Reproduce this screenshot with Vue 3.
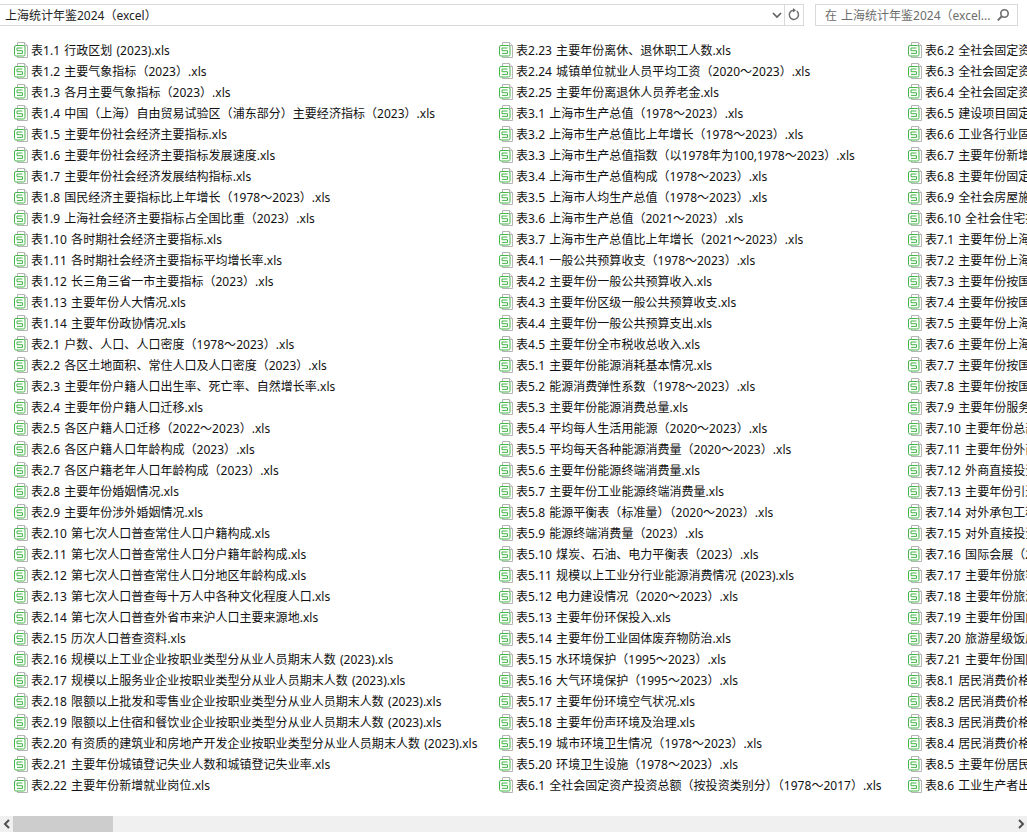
<template>
  <div class="window">
    <div class="toolbar">
      <div class="address">
        <span class="path">上海统计年鉴2024（excel）</span>
        <svg class="chevron" width="12" height="12" viewBox="0 0 12 12">
          <path d="M2 4l4 4 4-4" fill="none" stroke="#5f5f5f" stroke-width="1.6" />
        </svg>
        <span class="refresh">
          <svg width="14" height="14" viewBox="0 0 14 14">
            <path d="M9.8 3.2a4.6 4.6 0 1 1-3.4-1" fill="none" stroke="#6d6d6d" stroke-width="1.5" />
            <path d="M6 0v4.4l3-2.2z" fill="#6d6d6d" />
          </svg>
        </span>
      </div>
      <div class="search">
        <span class="search-text">在 上海统计年鉴2024（excel...</span>
        <svg width="14" height="14" viewBox="0 0 14 14">
          <circle cx="8.5" cy="5.5" r="3.7" fill="none" stroke="#6d6d6d" stroke-width="1.6" />
          <path d="M5.8 8.2L1.8 12.4" stroke="#6d6d6d" stroke-width="2" />
        </svg>
      </div>
    </div>

    <div class="files">
      <ul v-for="col in columns" :key="col.cls" class="column" :class="col.cls">
        <li v-for="name in col.items" :key="name" class="file">
          <svg class="file-icon" width="16" height="16" viewBox="0 0 16 16">
            <path d="M4.5 .5h7l3 3v12h-10z" fill="#fff" stroke="#b4b4b4" />
            <path d="M11.5 .5v3h3" fill="#f2f2f2" stroke="#b4b4b4" />
            <rect x="1.5" y="3.5" width="10.5" height="10.5" rx="1.5" fill="#fff" stroke="#45b549" />
            <path d="M4 6h5.5M4 8.7h5.5M4 11.4h5.5M4 6v2.7M9.5 8.7v2.7" fill="none" stroke="#45b549" />
          </svg>
          <span class="name">{{ name }}</span>
        </li>
      </ul>
    </div>

    <div class="hscroll">
      <span class="arrow">
        <svg width="8" height="10" viewBox="0 0 8 10"><path d="M6 1L2 5l4 4" fill="none" stroke="#505050" stroke-width="2" /></svg>
      </span>
      <div class="track"><div class="thumb"></div></div>
      <span class="arrow">
        <svg width="8" height="10" viewBox="0 0 8 10"><path d="M2 1l4 4-4 4" fill="none" stroke="#505050" stroke-width="2" /></svg>
      </span>
    </div>
  </div>
</template>

<script setup>
const col1 = [
  '表1.1 行政区划 (2023).xls',
  '表1.2 主要气象指标（2023）.xls',
  '表1.3 各月主要气象指标（2023）.xls',
  '表1.4 中国（上海）自由贸易试验区（浦东部分）主要经济指标（2023）.xls',
  '表1.5 主要年份社会经济主要指标.xls',
  '表1.6 主要年份社会经济主要指标发展速度.xls',
  '表1.7 主要年份社会经济发展结构指标.xls',
  '表1.8 国民经济主要指标比上年增长（1978～2023）.xls',
  '表1.9 上海社会经济主要指标占全国比重（2023）.xls',
  '表1.10 各时期社会经济主要指标.xls',
  '表1.11 各时期社会经济主要指标平均增长率.xls',
  '表1.12 长三角三省一市主要指标（2023）.xls',
  '表1.13 主要年份人大情况.xls',
  '表1.14 主要年份政协情况.xls',
  '表2.1 户数、人口、人口密度（1978～2023）.xls',
  '表2.2 各区土地面积、常住人口及人口密度（2023）.xls',
  '表2.3 主要年份户籍人口出生率、死亡率、自然增长率.xls',
  '表2.4 主要年份户籍人口迁移.xls',
  '表2.5 各区户籍人口迁移（2022～2023）.xls',
  '表2.6 各区户籍人口年龄构成（2023）.xls',
  '表2.7 各区户籍老年人口年龄构成（2023）.xls',
  '表2.8 主要年份婚姻情况.xls',
  '表2.9 主要年份涉外婚姻情况.xls',
  '表2.10 第七次人口普查常住人口户籍构成.xls',
  '表2.11 第七次人口普查常住人口分户籍年龄构成.xls',
  '表2.12 第七次人口普查常住人口分地区年龄构成.xls',
  '表2.13 第七次人口普查每十万人中各种文化程度人口.xls',
  '表2.14 第七次人口普查外省市来沪人口主要来源地.xls',
  '表2.15 历次人口普查资料.xls',
  '表2.16 规模以上工业企业按职业类型分从业人员期末人数 (2023).xls',
  '表2.17 规模以上服务业企业按职业类型分从业人员期末人数 (2023).xls',
  '表2.18 限额以上批发和零售业企业按职业类型分从业人员期末人数 (2023).xls',
  '表2.19 限额以上住宿和餐饮业企业按职业类型分从业人员期末人数 (2023).xls',
  '表2.20 有资质的建筑业和房地产开发企业按职业类型分从业人员期末人数 (2023).xls',
  '表2.21 主要年份城镇登记失业人数和城镇登记失业率.xls',
  '表2.22 主要年份新增就业岗位.xls'
]

const col2 = [
  '表2.23 主要年份离休、退休职工人数.xls',
  '表2.24 城镇单位就业人员平均工资（2020～2023）.xls',
  '表2.25 主要年份离退休人员养老金.xls',
  '表3.1 上海市生产总值（1978～2023）.xls',
  '表3.2 上海市生产总值比上年增长（1978～2023）.xls',
  '表3.3 上海市生产总值指数（以1978年为100,1978～2023）.xls',
  '表3.4 上海市生产总值构成（1978～2023）.xls',
  '表3.5 上海市人均生产总值（1978～2023）.xls',
  '表3.6 上海市生产总值（2021～2023）.xls',
  '表3.7 上海市生产总值比上年增长（2021～2023）.xls',
  '表4.1 一般公共预算收支（1978～2023）.xls',
  '表4.2 主要年份一般公共预算收入.xls',
  '表4.3 主要年份区级一般公共预算收支.xls',
  '表4.4 主要年份一般公共预算支出.xls',
  '表4.5 主要年份全市税收总收入.xls',
  '表5.1 主要年份能源消耗基本情况.xls',
  '表5.2 能源消费弹性系数（1978～2023）.xls',
  '表5.3 主要年份能源消费总量.xls',
  '表5.4 平均每人生活用能源（2020～2023）.xls',
  '表5.5 平均每天各种能源消费量（2020～2023）.xls',
  '表5.6 主要年份能源终端消费量.xls',
  '表5.7 主要年份工业能源终端消费量.xls',
  '表5.8 能源平衡表（标准量）（2020～2023）.xls',
  '表5.9 能源终端消费量（2023）.xls',
  '表5.10 煤炭、石油、电力平衡表（2023）.xls',
  '表5.11 规模以上工业分行业能源消费情况 (2023).xls',
  '表5.12 电力建设情况（2020～2023）.xls',
  '表5.13 主要年份环保投入.xls',
  '表5.14 主要年份工业固体废弃物防治.xls',
  '表5.15 水环境保护（1995～2023）.xls',
  '表5.16 大气环境保护（1995～2023）.xls',
  '表5.17 主要年份环境空气状况.xls',
  '表5.18 主要年份声环境及治理.xls',
  '表5.19 城市环境卫生情况（1978～2023）.xls',
  '表5.20 环境卫生设施（1978～2023）.xls',
  '表6.1 全社会固定资产投资总额（按投资类别分）（1978～2017）.xls'
]

const col3 = [
  '表6.2 全社会固定资产投资', '表6.3 全社会固定资产投资', '表6.4 全社会固定资产投资',
  '表6.5 建设项目固定资产', '表6.6 工业各行业固定资产', '表6.7 主要年份新增固定资产',
  '表6.8 主要年份固定资产', '表6.9 全社会房屋施工面积', '表6.10 全社会住宅投资',
  '表7.1 主要年份上海口岸', '表7.2 主要年份上海关区', '表7.3 主要年份按国别分',
  '表7.4 主要年份按国家分', '表7.5 主要年份上海市进口', '表7.6 主要年份上海市出口',
  '表7.7 主要年份按国别进口', '表7.8 主要年份按国别出口', '表7.9 主要年份服务贸易',
  '表7.10 主要年份总部经济', '表7.11 主要年份外商投资', '表7.12 外商直接投资',
  '表7.13 主要年份引进外资', '表7.14 对外承包工程', '表7.15 对外直接投资',
  '表7.16 国际会展（2023）', '表7.17 主要年份旅客', '表7.18 主要年份旅游',
  '表7.19 主要年份国内旅游', '表7.20 旅游星级饭店', '表7.21 主要年份国际旅游',
  '表8.1 居民消费价格指数', '表8.2 居民消费价格分类', '表8.3 居民消费价格涨跌',
  '表8.4 居民消费价格月度', '表8.5 主要年份居民消费', '表8.6 工业生产者出厂价格'
]

const columns = [
  { cls: 'col-a', items: col1 },
  { cls: 'col-b', items: col2 },
  { cls: 'col-c', items: col3 }
]
</script>

<style>
html,
body {
  margin: 0;
  overflow: hidden;
  background: #fff;
}
</style>

<style scoped>
.window {
  width: 1027px;
  height: 832px;
  display: flex;
  flex-direction: column;
  overflow: hidden;
  font-family: "Noto Sans", "Noto Sans CJK SC", sans-serif;
  font-size: 12px;
  color: #111;
}
.toolbar {
  display: flex;
  padding-top: 4px;
  height: 23px;
}
.address {
  width: 804px;
  height: 22px;
  display: flex;
  align-items: center;
  box-sizing: border-box;
  border: 1px solid #d9d9d9;
  border-left: none;
  padding-left: 5px;
}
.path {
  flex: 1;
  color: #222;
}
.chevron {
  margin-right: 1px;
}
.refresh {
  width: 18px;
  height: 20px;
  display: flex;
  align-items: center;
  justify-content: center;
  border-left: 1px solid #d9d9d9;
}
.search {
  width: 203px;
  height: 22px;
  margin-left: 11px;
  display: flex;
  align-items: center;
  justify-content: space-between;
  box-sizing: border-box;
  border: 1px solid #d9d9d9;
  padding: 0 7px 0 9px;
}
.search-text {
  color: #6d6d6d;
  word-spacing: 1px;
}
.files {
  flex: 1;
  display: flex;
  padding: 12px 0 0 13px;
  overflow: hidden;
}
.column {
  list-style: none;
  margin: 0;
  padding: 0;
  flex: none;
}
.col-a {
  width: 485px;
}
.col-b {
  width: 409px;
}
.col-c {
  width: 300px;
}
.file {
  height: 21px;
  display: flex;
  align-items: center;
  white-space: nowrap;
  word-spacing: 1px;
  letter-spacing: 0.03px;
}
.file-icon {
  flex: none;
  margin-right: 2px;
}
.hscroll {
  height: 16px;
  flex: none;
  display: flex;
  align-items: center;
  background: #f0f0f0;
}
.arrow {
  width: 13px;
  height: 16px;
  display: flex;
  align-items: center;
  justify-content: center;
  flex: none;
}
.track {
  flex: 1;
  height: 16px;
}
.thumb {
  width: 100px;
  height: 16px;
  background: #cdcdcd;
}
</style>
